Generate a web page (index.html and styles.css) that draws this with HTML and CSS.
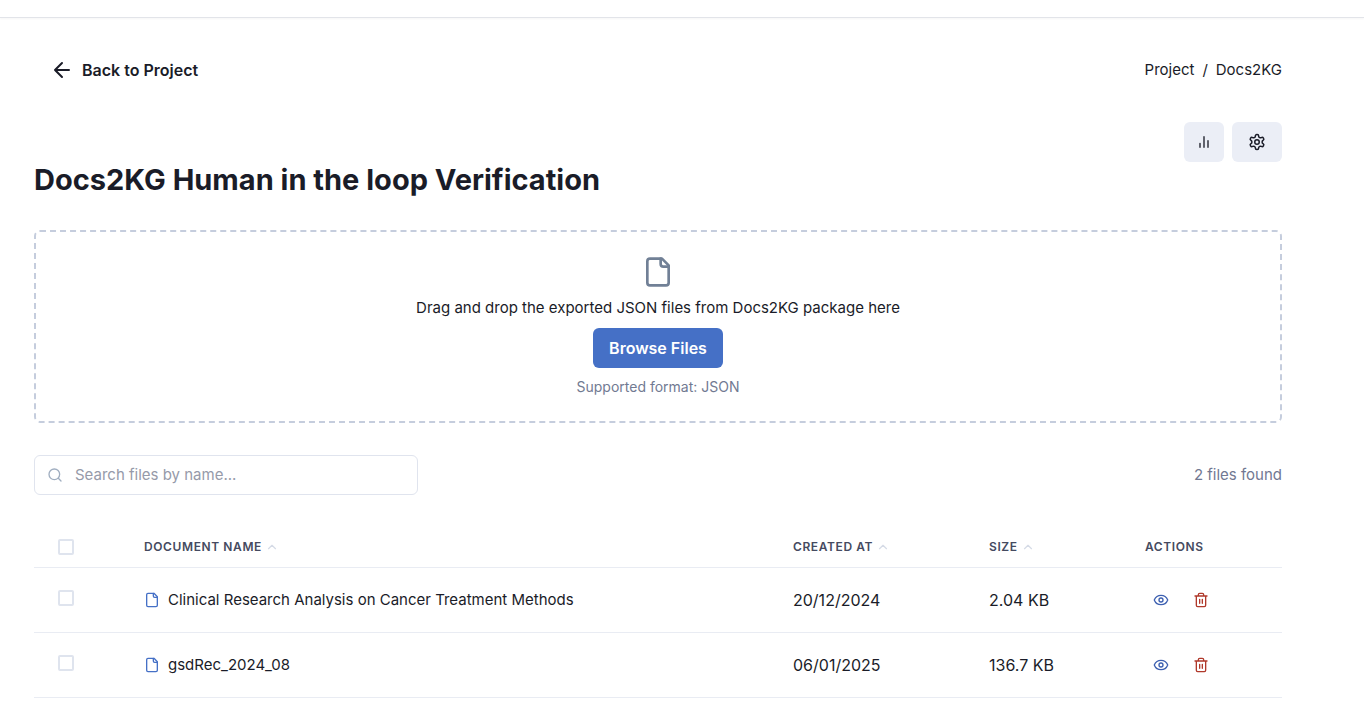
FILE: index.html
```
<!DOCTYPE html>
<html lang="en">
<head>
<meta charset="utf-8">
<title>Docs2KG Human in the loop Verification</title>
<link rel="stylesheet" href="styles.css">
</head>
<body>
<svg class="sprite" aria-hidden="true">
  <symbol id="file" viewBox="0 0 24 24"><path d="M15 2H6a2 2 0 0 0-2 2v16a2 2 0 0 0 2 2h12a2 2 0 0 0 2-2V7Z"/><path d="M14 2v4a2 2 0 0 0 2 2h4"/></symbol>
  <symbol id="eye" viewBox="0 0 24 24"><path d="M2.062 12.348a1 1 0 0 1 0-.696 10.750 10.750 0 0 1 19.876 0 1 1 0 0 1 0 .696 10.750 10.750 0 0 1-19.876 0"/><circle cx="12" cy="12" r="3"/></symbol>
  <symbol id="trash" viewBox="0 0 24 24"><path d="M3 6h18M19 6v14c0 1-1 2-2 2H7c-1 0-2-1-2-2V6M8 6V4c0-1 1-2 2-2h4c1 0 2 1 2 2v2M10 11v6M14 11v6"/></symbol>
  <symbol id="up" viewBox="0 0 24 24"><path d="m18 15-6-6-6 6"/></symbol>
</svg>
<header class="topbar"></header>
<main class="page">
  <nav class="nav">
    <a class="back" href="#"><svg class="icon icon-back" viewBox="0 0 24 24"><path d="m12 19-7-7 7-7M19 12H5"/></svg>Back to Project</a>
    <div class="crumbs"><a href="#">Project</a><span>/</span><a href="#">Docs2KG</a></div>
  </nav>
  <div class="tools">
    <button class="tool" aria-label="Statistics"><svg class="icon" viewBox="0 0 24 24"><path d="M18 20V10M12 20V4M6 20v-6"/></svg></button>
    <button class="tool tool-wide" aria-label="Settings"><svg class="icon icon-settings" viewBox="0 0 24 24"><path d="M12.220 2h-.44a2 2 0 0 0-2 2v.18a2 2 0 0 1-1 1.730l-.43.25a2 2 0 0 1-2 0l-.15-.08a2 2 0 0 0-2.730.73l-.22.38a2 2 0 0 0 .73 2.730l.15.1a2 2 0 0 1 1 1.720v.51a2 2 0 0 1-1 1.740l-.15.09a2 2 0 0 0-.73 2.730l.22.38a2 2 0 0 0 2.730.73l.15-.08a2 2 0 0 1 2 0l.43.25a2 2 0 0 1 1 1.730V20a2 2 0 0 0 2 2h.44a2 2 0 0 0 2-2v-.18a2 2 0 0 1 1-1.730l.43-.25a2 2 0 0 1 2 0l.15.08a2 2 0 0 0 2.730-.73l.22-.39a2 2 0 0 0-.73-2.730l-.15-.08a2 2 0 0 1-1-1.740v-.5a2 2 0 0 1 1-1.740l.15-.09a2 2 0 0 0 .73-2.730l-.22-.38a2 2 0 0 0-2.730-.73l-.15.08a2 2 0 0 1-2 0l-.43-.25a2 2 0 0 1-1-1.730V4a2 2 0 0 0-2-2z"/><circle cx="12" cy="12" r="3"/></svg></button>
  </div>
  <h1 class="title">Docs2KG Human in the loop Verification</h1>
  <section class="drop">
    <svg class="icon icon-drop"><use href="#file"/></svg>
    <p class="drop-text">Drag and drop the exported JSON files from Docs2KG package here</p>
    <button class="browse">Browse Files</button>
    <p class="hint">Supported format: JSON</p>
  </section>
  <div class="filter">
    <label class="search"><svg class="icon icon-search" viewBox="0 0 24 24"><circle cx="11" cy="11" r="8"/><path d="m21 21-4-4"/></svg><input type="text" placeholder="Search files by name..." aria-label="Search files by name"></label>
    <span class="count">2 files found</span>
  </div>
  <table class="files">
    <colgroup><col class="c-check"><col class="c-name"><col class="c-date"><col class="c-size"><col class="c-act"></colgroup>
    <thead><tr>
      <th><input type="checkbox" aria-label="Select all"></th>
      <th>Document Name<svg class="icon icon-sort"><use href="#up"/></svg></th>
      <th>Created At<svg class="icon icon-sort"><use href="#up"/></svg></th>
      <th>Size<svg class="icon icon-sort"><use href="#up"/></svg></th>
      <th>Actions</th>
    </tr></thead>
    <tbody>
      <tr>
        <td><input type="checkbox" aria-label="Select Clinical Research Analysis"></td>
        <td><div class="name"><svg class="icon"><use href="#file"/></svg>Clinical Research Analysis on Cancer Treatment Methods</div></td>
        <td class="figure">20/12/2024</td><td class="figure">2.04 KB</td>
        <td><div class="actions"><button class="act view" aria-label="View"><svg class="icon"><use href="#eye"/></svg></button><button class="act delete" aria-label="Delete"><svg class="icon"><use href="#trash"/></svg></button></div></td>
      </tr>
      <tr>
        <td><input type="checkbox" aria-label="Select gsdRec_2024_08"></td>
        <td><div class="name"><svg class="icon"><use href="#file"/></svg>gsdRec_2024_08</div></td>
        <td class="figure">06/01/2025</td><td class="figure">136.7 KB</td>
        <td><div class="actions"><button class="act view" aria-label="View"><svg class="icon"><use href="#eye"/></svg></button><button class="act delete" aria-label="Delete"><svg class="icon"><use href="#trash"/></svg></button></div></td>
      </tr>
    </tbody>
  </table>
</main>
</body>
</html>
```
FILE: styles.css
```
* { box-sizing: border-box; margin: 0; }
body { font: 15px/24px Inter, "Liberation Sans", sans-serif; color: #1a1c28; background: #fff; }
a { color: inherit; text-decoration: none; }
button { font: inherit; color: inherit; border: 0; padding: 0; cursor: pointer; }
.sprite { display: none; }
.icon { width: 16px; height: 16px; flex: none; fill: none; stroke: currentColor; stroke-width: 2; stroke-linecap: round; stroke-linejoin: round; }
.topbar { height: 18px; border-bottom: 1px solid #e2e4e9; box-shadow: 0 1px 2px #0000000a; }
.page { padding: 32px 82px 0 34px; }
.nav { display: flex; justify-content: space-between; align-items: center; height: 40px; }
.back { display: flex; align-items: center; gap: 8px; padding-left: 16px; font-size: 16px; font-weight: 600; }
.icon-back { width: 24px; height: 24px; }
.crumbs { display: flex; gap: 8px; }
.tools { display: flex; justify-content: flex-end; gap: 8px; margin-top: 32px; }
.tool { display: flex; align-items: center; justify-content: center; width: 40px; height: 40px; border-radius: 6px; background: #ebeef6; }
.tool-wide { width: 50px; }
.icon-settings { width: 18px; height: 18px; }
.title { font-size: 29px; line-height: 36px; font-weight: 700; }
.drop { display: flex; flex-direction: column; align-items: center; margin-top: 32px; padding: 24px; border: 2px dashed #c5cddd; border-radius: 6px; }
.icon-drop { width: 32px; height: 32px; color: #718096; }
.drop-text { margin: 8px 0; }
.browse { height: 40px; padding: 0 16px; border-radius: 6px; background: #4570c6; color: #fff; font-size: 16px; font-weight: 600; }
.hint { margin-top: 8px; font-size: 14px; line-height: 21px; color: #717a92; }
.filter { display: flex; justify-content: space-between; align-items: center; margin-top: 32px; }
.search { display: flex; align-items: center; gap: 12px; width: 384px; height: 40px; padding: 0 12px; border: 1px solid #e0e4ee; border-radius: 6px; }
.icon-search { color: #a0aec0; }
.search input { flex: 1; min-width: 0; border: 0; padding: 0; outline: 0; font: inherit; background: none; }
.search input::placeholder { color: #969aa9; opacity: 1; }
.count { color: #717892; }
.files { width: 100%; margin-top: 32px; table-layout: fixed; border-collapse: collapse; }
.c-check { width: 86px; }
.c-date { width: 196px; }
.c-size { width: 156px; }
.c-act { width: 161px; }
.files th, .files td { padding: 0 24px; text-align: left; border-bottom: 1px solid #e9ecf3; }
.files th { height: 40px; font-size: 12px; line-height: 16px; font-weight: 600; letter-spacing: 0.05em; text-transform: uppercase; color: #454a60; }
.files td { height: 65px; }
.files .figure { font-size: 16px; }
.files input { display: block; appearance: none; width: 16px; height: 16px; margin: 0; border: 2px solid #dfe4ee; border-radius: 2px; }
.files td input { margin-bottom: 4px; }
.icon-sort { width: 14px; height: 14px; margin-left: 3px; vertical-align: middle; color: #d5dbe6; }
.name { display: flex; align-items: center; gap: 8px; white-space: nowrap; }
.name .icon { color: #4570c6; }
.actions { display: flex; gap: 8px; }
.act { display: flex; align-items: center; justify-content: center; width: 32px; height: 32px; background: none; }
.view { color: #3c5fb0; }
.delete { color: #b0392b; }
```
